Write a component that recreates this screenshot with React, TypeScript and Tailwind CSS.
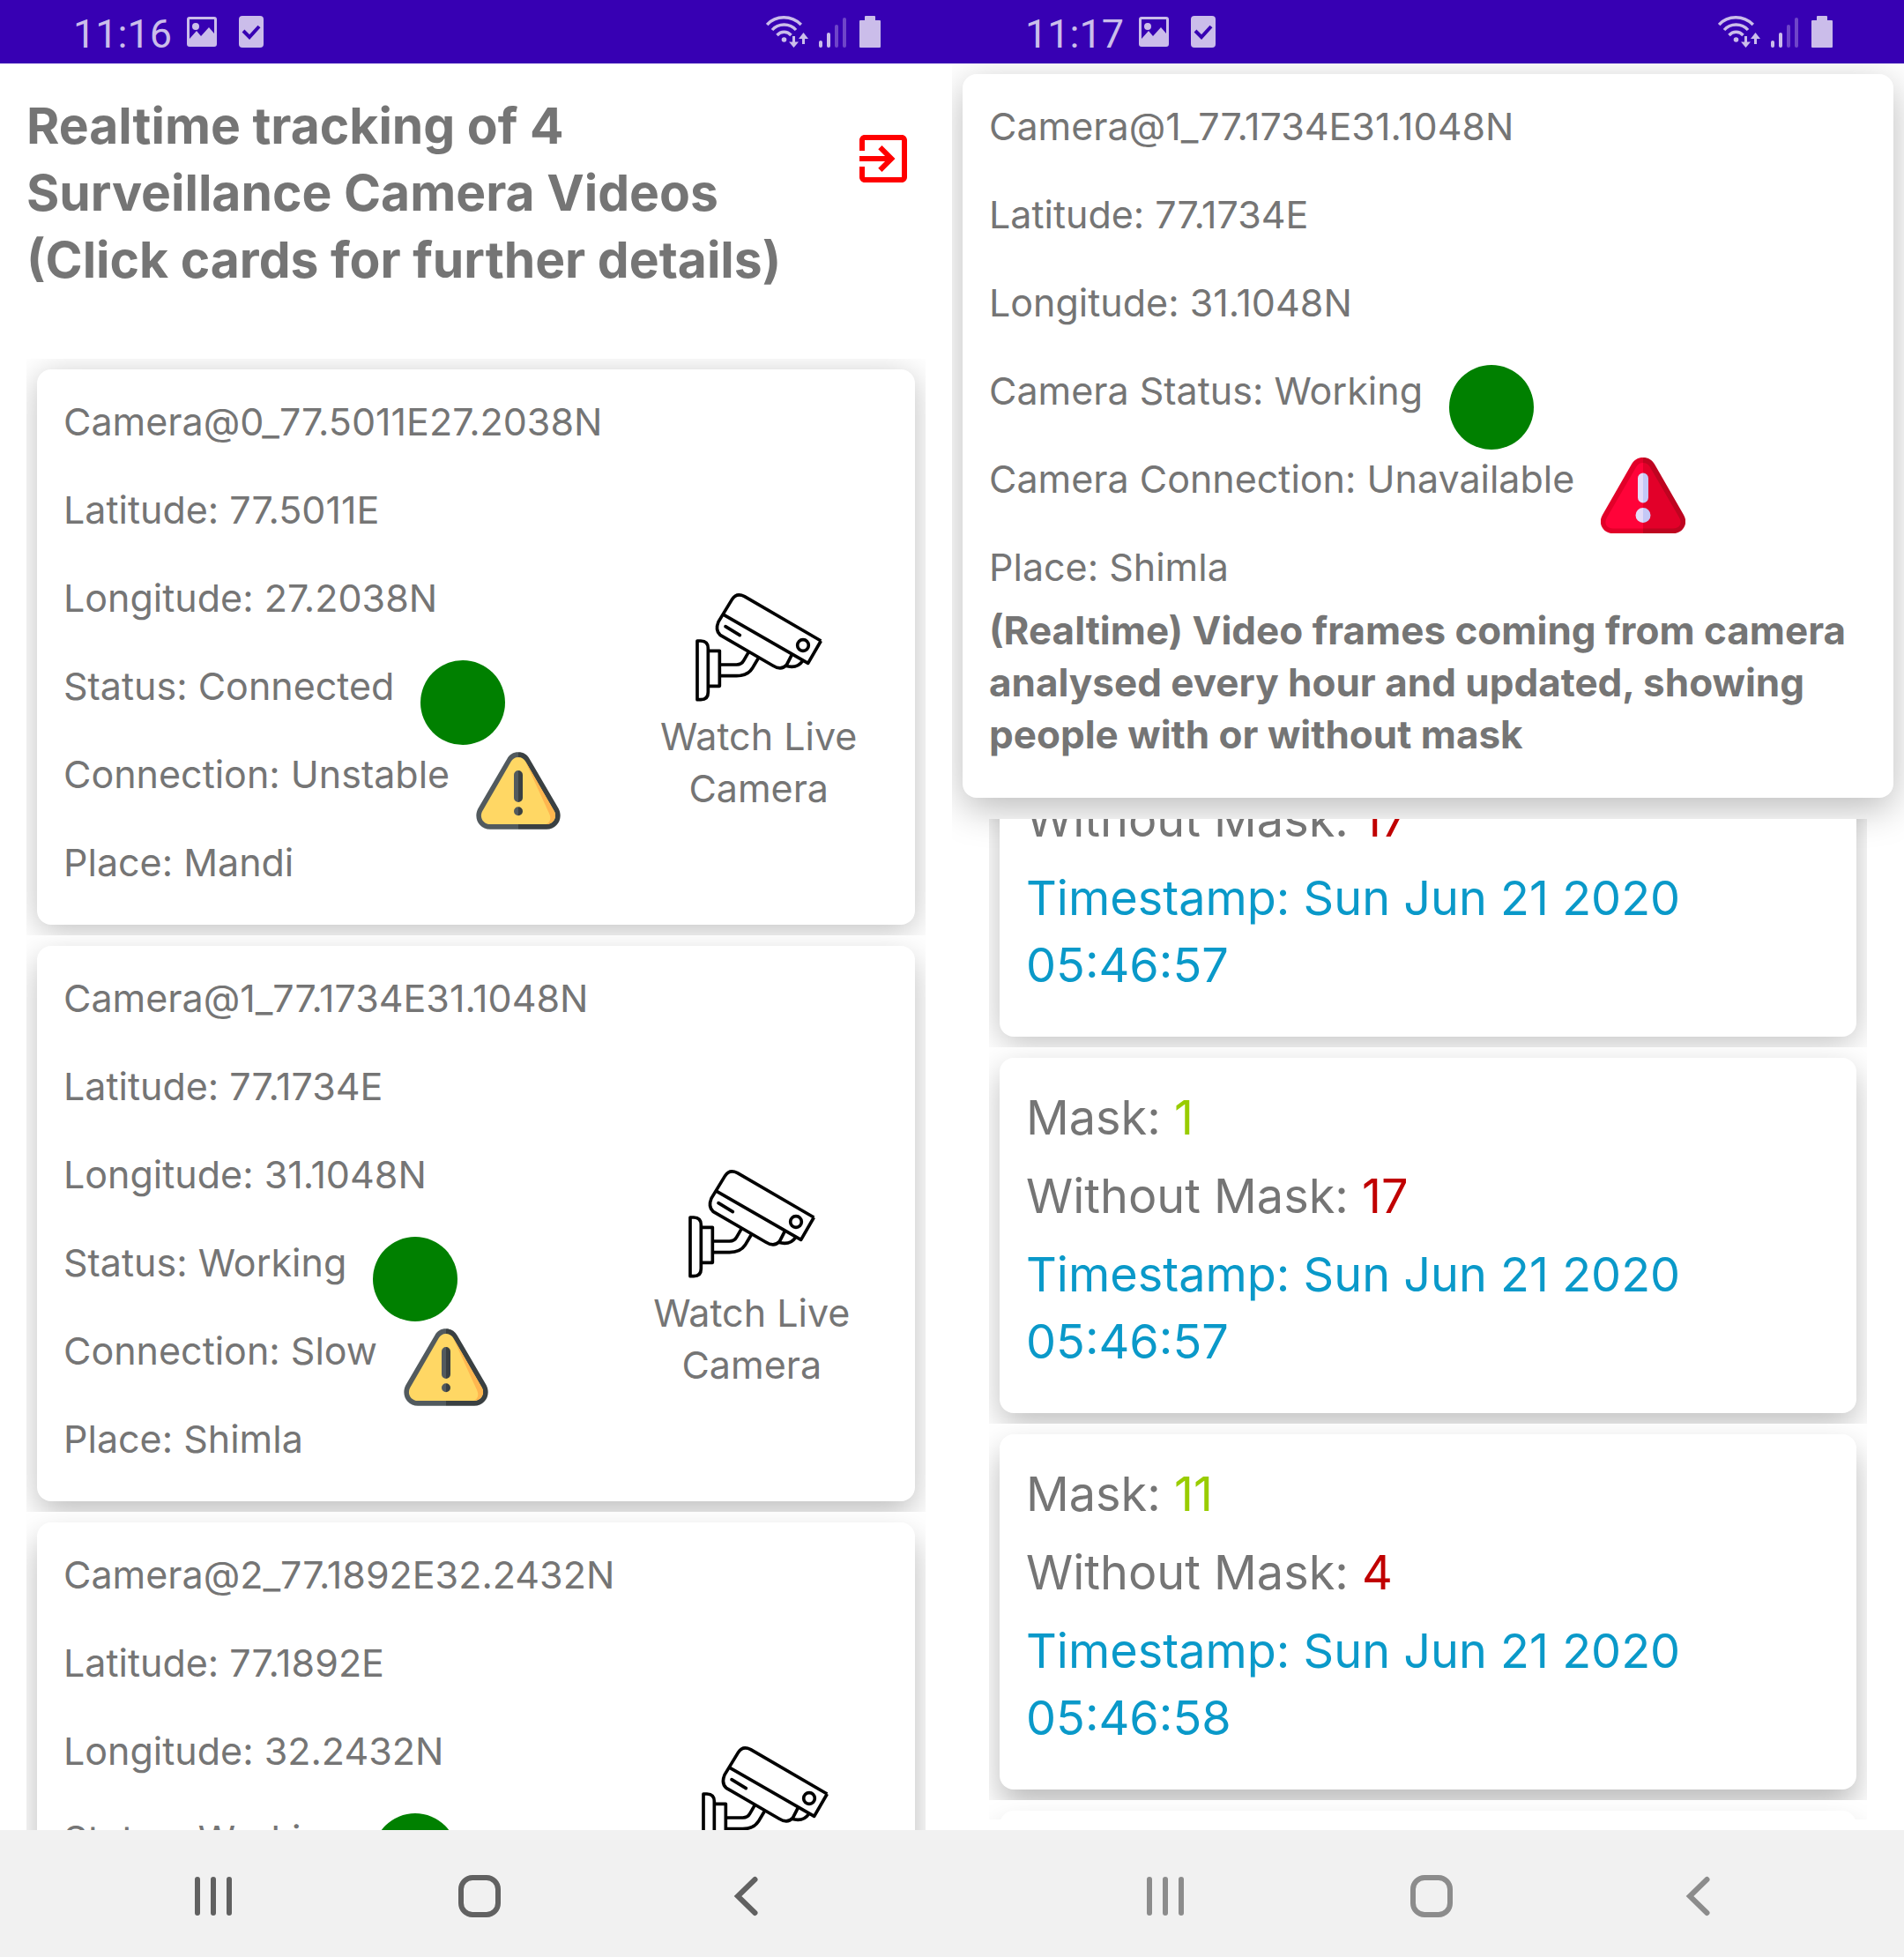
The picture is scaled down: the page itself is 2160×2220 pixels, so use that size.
import type { ReactNode } from "react";

type Health = "ok" | "warning" | "error";

type CameraInfo = {
  id: string;
  latitude: string;
  longitude: string;
  status: string;
  connection: string;
  place: string;
};

type MaskRecord = { mask: number; withoutMask: number; timestamp: string };

const cameras: CameraInfo[] = [
  { id: "Camera@0_77.5011E27.2038N", latitude: "77.5011E", longitude: "27.2038N", status: "Connected", connection: "Unstable", place: "Mandi" },
  { id: "Camera@1_77.1734E31.1048N", latitude: "77.1734E", longitude: "31.1048N", status: "Working", connection: "Slow", place: "Shimla" },
  { id: "Camera@2_77.1892E32.2432N", latitude: "77.1892E", longitude: "32.2432N", status: "Working", connection: "Slow", place: "Manali" },
];

const records: MaskRecord[] = [
  { mask: 1, withoutMask: 17, timestamp: "Sun Jun 21 2020 05:46:57" },
  { mask: 1, withoutMask: 17, timestamp: "Sun Jun 21 2020 05:46:57" },
  { mask: 11, withoutMask: 4, timestamp: "Sun Jun 21 2020 05:46:58" },
  { mask: 9, withoutMask: 6, timestamp: "Sun Jun 21 2020 05:46:59" },
];

// The light sits above the screen, so cards further down cast longer shadows.
const shadows = [
  "shadow-[0_7px_36px_rgba(0,0,0,0.25)]",
  "shadow-[0_14px_36px_rgba(0,0,0,0.25)]",
  "shadow-[0_18px_36px_rgba(0,0,0,0.27)]",
  "shadow-[0_22px_36px_rgba(0,0,0,0.27)]",
];

function PictureIcon() {
  return (
    <svg className="h-9 w-9" viewBox="0 0 36 36" aria-hidden="true">
      <path
        fill="#cbbdea"
        fillRule="evenodd"
        d="M4 1h28a3 3 0 0 1 3 3v28a3 3 0 0 1-3 3H4a3 3 0 0 1-3-3V4a3 3 0 0 1 3-3zM4 4v22l8-9 5 6 9-10 6 7V4zM11 8a4 4 0 1 1 0 8 4 4 0 0 1 0-8z"
      />
    </svg>
  );
}

function TaskIcon() {
  return (
    <svg className="h-9 w-7" viewBox="0 0 28 36" aria-hidden="true">
      <rect width="28" height="36" rx="4" fill="#cbbdea" />
      <path d="M5 17l7 7L23 12" fill="none" stroke="#3700b3" strokeWidth="4" />
    </svg>
  );
}

function WifiIcon() {
  return (
    <svg className="h-9 w-12" viewBox="0 0 48 36" fill="none" aria-hidden="true">
      <g stroke="#cbbdea" strokeWidth="3.4">
        <path d="M1.2 10C11-1 29-1 39.8 10" />
        <path d="M7 16C14 8 27 8 34 16" />
        <path d="M12.500 22C17 17 24 17 28.500 22" />
      </g>
      <circle cx="20.500" cy="27" r="2.800" fill="#cbbdea" />
      <path d="M30 23h3v6.500h4L31.500 36 26 29.500h4zM41 32h3v-6h4L42.500 19 37 26h4z" fill="#cbbdea" />
    </svg>
  );
}

function SignalIcon() {
  return (
    <svg className="h-9 w-8" viewBox="0 0 32 36" aria-hidden="true">
      <rect x="0" y="28" width="4" height="8" rx="2" fill="#cbbdea" />
      <rect x="9" y="19" width="4" height="17" rx="2" fill="#cbbdea" />
      <rect x="18" y="10" width="4" height="26" rx="2" fill="#6f45c9" />
      <rect x="27" y="2" width="4" height="34" rx="2" fill="#6f45c9" />
    </svg>
  );
}

function BatteryIcon() {
  return (
    <svg className="h-9 w-6" viewBox="0 0 24 36" aria-hidden="true">
      <path d="M7 0h10a1 1 0 0 1 1 1v4h5a1 1 0 0 1 1 1v29a1 1 0 0 1-1 1H1a1 1 0 0 1-1-1V6a1 1 0 0 1 1-1h5V1a1 1 0 0 1 1-1z" fill="#cbbdea" />
    </svg>
  );
}

function ExitIcon() {
  return (
    <svg className="size-[72px]" viewBox="0 0 24 24" fill="#ff0000" aria-hidden="true">
      <path d="M10.090 15.590L11.500 17l5-5-5-5-1.410 1.410L12.670 11H3v2h9.670l-2.580 2.590zM19 3H5c-1.110 0-2 .9-2 2v4h2V5h14v14H5v-4H3v4c0 1.100.89 2 2 2h14c1.100 0 2-.9 2-2V5c0-1.100-.9-2-2-2z" />
    </svg>
  );
}

function SecurityCameraIcon() {
  return (
    <svg className="size-36" viewBox="252 65 432 432" fill="none" stroke="#000" strokeWidth="11" strokeLinejoin="round" aria-hidden="true">
      <path d="M679 260L419 109Q392 95 377 118L330 195Q318 224 336 240L515 344C534 356 551 354 562 342L580 307" />
      <path d="M679 260L635 336L348 171" />
      <path d="M354 211L403 241" strokeLinecap="round" />
      <circle cx="618" cy="275" r="19" />
      <path d="M558 345Q598 356 616 329" />
      <path d="M258 260H270Q295 260 295 286V434Q295 460 270 460H258Z" />
      <path d="M295 294H334V414H295" />
      <path d="M334 341H392Q409 340 416 327L433 298" />
      <path d="M334 379H392Q429 379 445 354L467 317" />
    </svg>
  );
}

function OkIcon() {
  return (
    <svg className="size-24 shrink-0" viewBox="0 0 96 96" role="img" aria-label="Good">
      <circle cx="48" cy="48" r="48" fill="#008000" />
    </svg>
  );
}

function WarningIcon() {
  return (
    <svg className="size-24 shrink-0" viewBox="330 387 288 288" role="img" aria-label="Warning">
      <path d="M474 400C456 400 444 408 436 422L337 592C320 624 341 662 378 662H474Z" fill="#525a5e" />
      <path d="M474 400C492 400 504 408 512 422L611 592C628 624 607 662 570 662H474Z" fill="#3a4042" />
      <path d="M474 417C462 417 454 423 449 432L352 600C340 621 355 645 378 645H570C593 645 608 621 596 600L499 432C494 423 486 417 474 417Z" fill="#ffd764" />
      <path d="M497 429L596 600C608 621 593 645 568 645C583 639 587 625 579 608Z" fill="#ffb64f" />
      <path d="M474 462a15 15 0 0 0-15 15v78a15 15 0 0 0 15 15zM474 586a15 15 0 0 0 0 30z" fill="#525a5e" />
      <path d="M474 462a15 15 0 0 1 15 15v78a15 15 0 0 1-15 15zM474 586a15 15 0 0 1 0 30z" fill="#3a4042" />
    </svg>
  );
}

function ErrorIcon() {
  return (
    <svg className="size-24 shrink-0" viewBox="0 0 96 96" role="img" aria-label="Error">
      <path d="M48 5C42 5 38 7.500 35 12.500L2 70C-4 80 3 91 14 91H48Z" fill="#e20029" />
      <path d="M48 5C54 5 58 7.500 61 12.500L94 70C100 80 93 91 82 91H48Z" fill="#be0420" />
      <path d="M48 11C44.500 11 42 12.500 40 16L7 73C3 80 7 85.500 14 85.500H48Z" fill="#ff0339" />
      <path d="M48 11C51.500 11 54 12.500 56 16L89 73C93 80 89 85.500 82 85.500H48Z" fill="#e20029" />
      <path d="M48 22.500a6 6 0 0 0-6 6v22a6 6 0 0 0 6 6zM48 62a8.500 8.500 0 0 0 0 17z" fill="#e4dcf8" />
      <path d="M48 22.500a6 6 0 0 1 6 6v22a6 6 0 0 1-6 6zM48 62a8.500 8.500 0 0 1 0 17z" fill="#c4c8f6" />
    </svg>
  );
}

function HealthIcon({ health }: { health: Health }) {
  if (health === "ok") return <OkIcon />;
  if (health === "warning") return <WarningIcon />;
  return <ErrorIcon />;
}

function StatusBar({ time }: { time: string }) {
  return (
    <header className="flex h-[72px] shrink-0 items-center justify-between bg-[#3700b3] pr-[81px] pl-[83px]">
      <div className="flex items-center">
        <span className="mr-4 pt-1 font-[Roboto,sans-serif] text-[45px] leading-none text-[#cbbdea]">{time}</span>
        <PictureIcon />
        <span className="ml-6 flex">
          <TaskIcon />
        </span>
      </div>
      <div className="flex items-center">
        <WifiIcon />
        <span className="mx-3 flex">
          <SignalIcon />
        </span>
        <span className="ml-0.5 flex">
          <BatteryIcon />
        </span>
      </div>
    </header>
  );
}

function NavBar({ tone }: { tone: string }) {
  const button = "flex h-full w-[302px] items-center justify-center";
  return (
    <nav className={`flex h-36 shrink-0 items-center justify-center bg-[#f1f1f1] pt-1.5 pl-2 ${tone}`}>
      <button type="button" aria-label="Recent apps" className={button}>
        <svg className="size-12" viewBox="0 0 48 48" fill="none" stroke="currentColor" strokeWidth="6" strokeLinecap="round">
          <path d="M6 5v38M24 5v38M42 5v38" />
        </svg>
      </button>
      <button type="button" aria-label="Home" className={button}>
        <svg className="size-12" viewBox="0 0 48 48" fill="none" stroke="currentColor" strokeWidth="6">
          <rect x="3" y="3" width="42" height="42" rx="13" />
        </svg>
      </button>
      <button type="button" aria-label="Back" className={button}>
        <svg className="size-12" viewBox="0 0 48 48" fill="none" stroke="currentColor" strokeWidth="6" strokeLinecap="round">
          <path d="M34.500 5L15 24l19.500 19" />
        </svg>
      </button>
    </nav>
  );
}

function Row({ children, health }: { children: ReactNode; health?: Health }) {
  return (
    <div className="flex h-[100px] items-start gap-[30px] whitespace-nowrap">
      <p>{children}</p>
      {health && <HealthIcon health={health} />}
    </div>
  );
}

function CameraCard({ camera, shadow }: { camera: CameraInfo; shadow: string }) {
  return (
    <li className="overflow-hidden p-3">
      <article className={`flex rounded-2xl bg-white pt-[30px] pl-[30px] text-[43px] leading-[59px] ${shadow}`}>
        <div>
          <Row>{camera.id}</Row>
          <Row>{`Latitude: ${camera.latitude}`}</Row>
          <Row>{`Longitude: ${camera.longitude}`}</Row>
          <Row health="ok">{`Status: ${camera.status}`}</Row>
          <Row health="warning">{`Connection: ${camera.connection}`}</Row>
          <Row>{`Place: ${camera.place}`}</Row>
        </div>
        <div className="flex flex-1 justify-center pt-[213px]">
          <button type="button" className="flex w-60 flex-col items-center self-start text-center">
            <SecurityCameraIcon />
            <span>Watch Live Camera</span>
          </button>
        </div>
      </article>
    </li>
  );
}

function CameraListScreen() {
  return (
    <section className="flex h-full min-w-0 flex-col overflow-hidden bg-white">
      <StatusBar time="11:16" />
      <main className="min-h-0 flex-1 overflow-hidden">
        <div className="flex items-start justify-between pt-[33px] pr-[42px] pb-[74px] pl-[30px]">
          <h1 className="text-[57px] leading-[76px] font-bold">
            <span className="block">Realtime tracking of 4</span>
            <span className="block">Surveillance Camera Videos</span>
            <span className="block">(Click cards for further details)</span>
          </h1>
          <button type="button" aria-label="Log out" className="mt-[39px]">
            <ExitIcon />
          </button>
        </div>
        <ul className="px-[30px]">
          {cameras.map((camera, index) => (
            <CameraCard key={camera.id} camera={camera} shadow={shadows[index]} />
          ))}
        </ul>
      </main>
      <NavBar tone="text-[#616161]" />
    </section>
  );
}

function RecordCard({ record, shadow }: { record: MaskRecord; shadow: string }) {
  return (
    <li className="overflow-hidden p-3">
      <article
        className={`flex flex-col gap-[13px] rounded-2xl bg-white px-[30px] pt-[30px] pb-[43px] text-[54px] leading-[76px] ${shadow}`}
      >
        <p>
          Mask: <span className="text-[#99cc00]">{record.mask}</span>
        </p>
        <p>
          Without Mask: <span className="text-[#c00000]">{record.withoutMask}</span>
        </p>
        <p className="text-[#0a99c9]">{`Timestamp: ${record.timestamp}`}</p>
      </article>
    </li>
  );
}

function CameraDetailScreen() {
  return (
    <section className="flex h-full min-w-0 flex-col overflow-hidden bg-white">
      <StatusBar time="11:17" />
      <main className="flex min-h-0 flex-1 flex-col overflow-hidden pb-3">
        <article className="m-3 shrink-0 rounded-2xl bg-white px-[30px] pt-[30px] pb-[42px] text-[43px] leading-[59px] shadow-[0_12px_44px_rgba(0,0,0,0.27)]">
          <Row>Camera@1_77.1734E31.1048N</Row>
          <Row>Latitude: 77.1734E</Row>
          <Row>Longitude: 31.1048N</Row>
          <Row health="ok">Camera Status: Working</Row>
          <Row health="error">Camera Connection: Unavailable</Row>
          <p>Place: Shimla</p>
          <p className="mt-[13px] text-[44px] leading-[59px] font-bold">
            (Realtime) Video frames coming from camera analysed every hour and updated, showing people with or without mask
          </p>
        </article>
        <div className="mx-[42px] mt-3 min-h-0 flex-1 overflow-hidden">
          <ul className="-mt-[168px]">
            {records.map((record, index) => (
              <RecordCard key={index} record={record} shadow={shadows[index]} />
            ))}
          </ul>
        </div>
      </main>
      <NavBar tone="text-[#8c8c8c]" />
    </section>
  );
}

export default function App() {
  return (
    <div className="grid h-screen grid-cols-2 bg-white font-[Inter,sans-serif] text-[#757575]">
      <CameraListScreen />
      <CameraDetailScreen />
    </div>
  );
}
